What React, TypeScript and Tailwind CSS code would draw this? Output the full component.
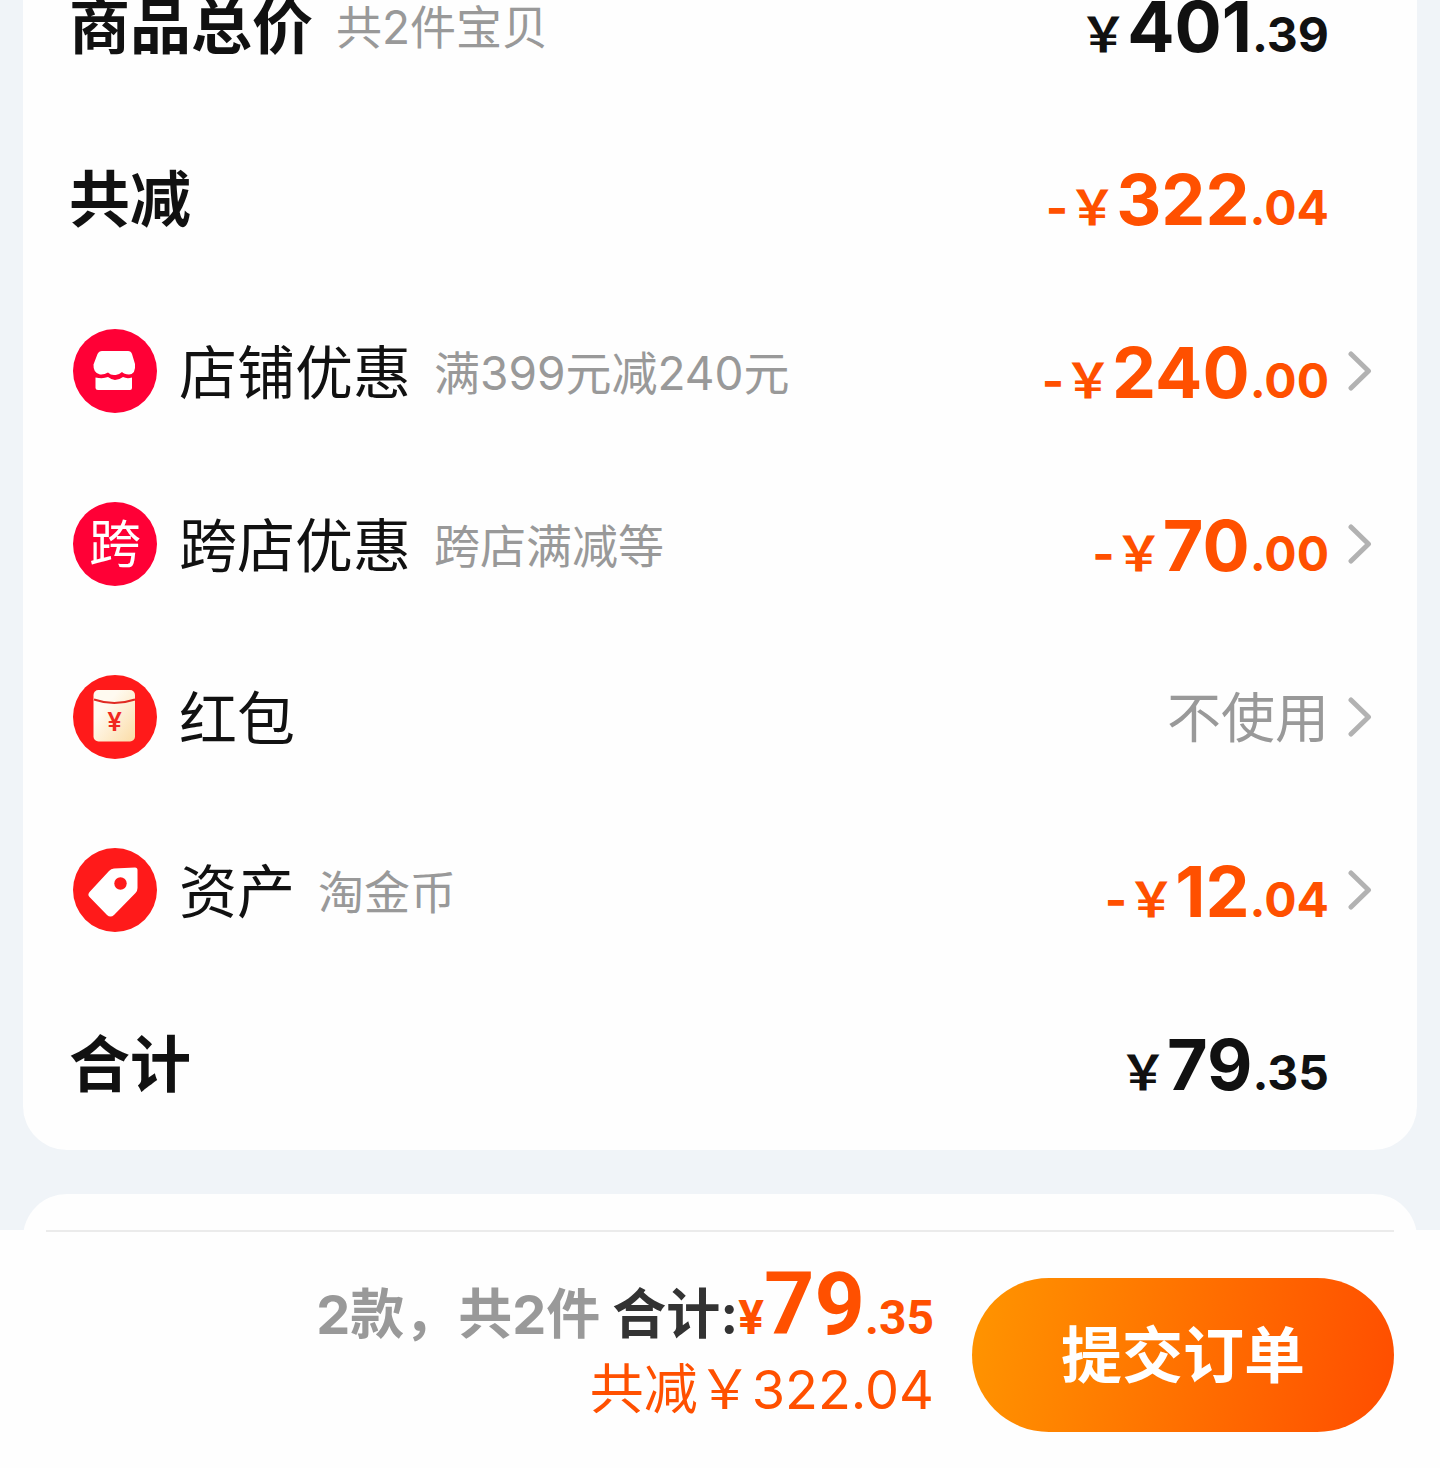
import React from 'react';

type PriceValue = {
	integer: string;
	decimal: string;
	minus?: boolean;
};

type Discount = {
	id: number;
	name: string;
	hint?: string;
	icon: React.ReactNode;
	price?: PriceValue;
	placeholder?: string;
};

const StoreIcon: React.FC = () => (
	<svg viewBox="0 0 84 84" className="size-[84px] shrink-0" aria-hidden="true">
		<circle cx="42" cy="42" r="42" fill="#ff0036" />
		<path
			d="M29 22H55Q58 22 59 25L62 35Q63 45 56 45.500Q51 45 49 43Q45 46.500 42 46Q38 46.500 35 43.500Q31 46 27 45.500Q20 44 20.500 35.500L24.500 25Q26 22 29 22Z"
			fill="#fff"
		/>
		<path
			d="M22.500 48.500Q30 50 35 48Q39 51 42 51Q46 51 50 48Q54 50 59 48.500V59Q59 61 57 61H25Q22.500 61 22.500 59Z"
			fill="#fff"
		/>
	</svg>
);

const CrossStoreIcon: React.FC = () => (
	<span
		className="flex size-[84px] shrink-0 items-center justify-center rounded-full bg-[#ff0036] pt-0.5 text-[52px] leading-none text-white"
		aria-hidden="true"
	>
		跨
	</span>
);

const RedPacketIcon: React.FC = () => (
	<svg viewBox="0 0 84 84" className="size-[84px] shrink-0" aria-hidden="true">
		<defs>
			<linearGradient id="packet" x1="0" y1="0" x2="1" y2="1">
				<stop offset="0.3" stopColor="#fffaf0" />
				<stop offset="1" stopColor="#fbdca6" />
			</linearGradient>
		</defs>
		<circle cx="42" cy="42" r="42" fill="#ff1a1a" />
		<rect x="20.500" y="15" width="41.500" height="51.500" rx="5" fill="url(#packet)" />
		<path d="M21 24.500Q41 31.500 62 24.500" fill="none" stroke="#e02a22" strokeWidth="2" />
		<text x="41.500" y="55.500" textAnchor="middle" fontSize="26" fontWeight="600" fill="#f0281e">
			¥
		</text>
	</svg>
);

const TagIcon: React.FC = () => (
	<svg viewBox="0 0 84 84" className="size-[84px] shrink-0" aria-hidden="true">
		<circle cx="42" cy="42" r="42" fill="#ff1a1a" />
		<path
			d="M41 20.500L62 19.500Q64.500 19.500 64.500 22V40Q64.500 43 62.500 45L41 67Q37.500 70 34 67L16.500 49Q14 46.500 17 43.500L36 23Q38 20.700 41 20.500Z"
			fill="#fff"
		/>
		<circle cx="47.500" cy="35.500" r="6.200" fill="#ff1a1a" />
	</svg>
);

const Chevron: React.FC = () => (
	<svg viewBox="0 0 24 40" className="h-10 w-6" fill="none" aria-hidden="true">
		<path
			d="M3 3L20.500 20L3 37"
			stroke="#b2b2b2"
			strokeWidth="5"
			strokeLinecap="round"
			strokeLinejoin="round"
		/>
	</svg>
);

const discounts: Discount[] = [
	{
		id: 1,
		name: '店铺优惠',
		hint: '满399元减240元',
		icon: <StoreIcon />,
		price: { integer: '240', decimal: '00', minus: true },
	},
	{
		id: 2,
		name: '跨店优惠',
		hint: '跨店满减等',
		icon: <CrossStoreIcon />,
		price: { integer: '70', decimal: '00', minus: true },
	},
	{
		id: 3,
		name: '红包',
		icon: <RedPacketIcon />,
		placeholder: '不使用',
	},
	{
		id: 4,
		name: '资产',
		hint: '淘金币',
		icon: <TagIcon />,
		price: { integer: '12', decimal: '04', minus: true },
	},
];

const Price: React.FC<{ value: PriceValue }> = ({ value }) => (
	<span
		className={`flex items-baseline pt-3 text-[48px] leading-[84px] font-bold ${
			value.minus ? 'text-[#ff5000]' : 'text-[#111]'
		}`}
	>
		{value.minus && <span>-</span>}
		<span>￥</span>
		<span className="text-[70px]">{value.integer}</span>
		<span>.{value.decimal}</span>
	</span>
);

const SummaryRow: React.FC<{ title: string; hint?: string; price: PriceValue }> = ({
	title,
	hint,
	price,
}) => (
	<div className="flex h-[173px] items-center justify-between pr-[88px] pl-[46px]">
		<div className="flex items-center gap-[23px] pt-1">
			<h2 className="text-[61px] leading-[84px] font-bold">{title}</h2>
			{hint && <span className="text-[46px] leading-[84px] text-[#999]">{hint}</span>}
		</div>
		<Price value={price} />
	</div>
);

const DiscountRow: React.FC<{ discount: Discount }> = ({ discount }) => (
	<button
		type="button"
		className="flex h-[173px] w-full items-center justify-between pr-[45px] pl-[50px] text-left"
	>
		<span className="flex items-center">
			{discount.icon}
			<span className="ml-[22px] pt-1 text-[58px] leading-[84px]">{discount.name}</span>
			{discount.hint && (
				<span className="ml-[23px] pt-1 text-[46px] leading-[84px] text-[#999]">
					{discount.hint}
				</span>
			)}
		</span>
		<span className="flex items-center gap-[19px]">
			{discount.price && <Price value={discount.price} />}
			{discount.placeholder && (
				<span className="pt-1 text-[54px] leading-[84px] text-[#999]">
					{discount.placeholder}
				</span>
			)}
			<Chevron />
		</span>
	</button>
);

const CheckoutBar: React.FC = () => (
	<footer className="grow bg-[#fefefe] px-[46px]">
		<div className="flex items-start justify-end gap-[38px] border-t-2 border-[#ebebeb]">
			<div className="flex flex-col items-end pt-7">
				<div className="flex items-baseline text-[54px] leading-[88px] font-bold">
					<span className="text-[#999]">2款，共2件</span>
					<span className="ml-3 text-[#333]">合计:</span>
					<span className="flex items-baseline font-[Roboto] text-[48px] text-[#ff5000]">
						<span>¥</span>
						<span className="text-[88px]">79</span>
						<span>.35</span>
					</span>
				</div>
				<div className="text-[54px] leading-[56px] text-[#ff5000]">共减￥322.04</div>
			</div>
			<button
				type="button"
				className="mt-[46px] h-[154px] w-[422px] rounded-full bg-[linear-gradient(100deg,#ff9500,#ff4d00)] pt-1 text-[61px] font-bold text-white"
			>
				提交订单
			</button>
		</div>
	</footer>
);

const App: React.FC = () => {
	return (
		<div
			lang="zh-CN"
			className="flex min-h-screen flex-col bg-[#f0f4f8] font-[Inter,'Noto_Sans_CJK_SC',sans-serif] text-[#111]"
		>
			<main className="overflow-hidden px-[23px]">
				{/* Price details, scrolled slightly past the top edge */}
				<section className="-mt-[62px] rounded-[44px] bg-[#fefefe] pb-px">
					<SummaryRow
						title="商品总价"
						hint="共2件宝贝"
						price={{ integer: '401', decimal: '39' }}
					/>
					<SummaryRow title="共减" price={{ integer: '322', decimal: '04', minus: true }} />
					{discounts.map(discount => (
						<DiscountRow key={discount.id} discount={discount} />
					))}
					<SummaryRow title="合计" price={{ integer: '79', decimal: '35' }} />
				</section>
				{/* Next card, mostly hidden behind the checkout bar */}
				<section className="mt-11 -mb-11 h-20 rounded-t-[44px] bg-[#fefefe]" />
			</main>
			<CheckoutBar />
		</div>
	);
};

export default App;
